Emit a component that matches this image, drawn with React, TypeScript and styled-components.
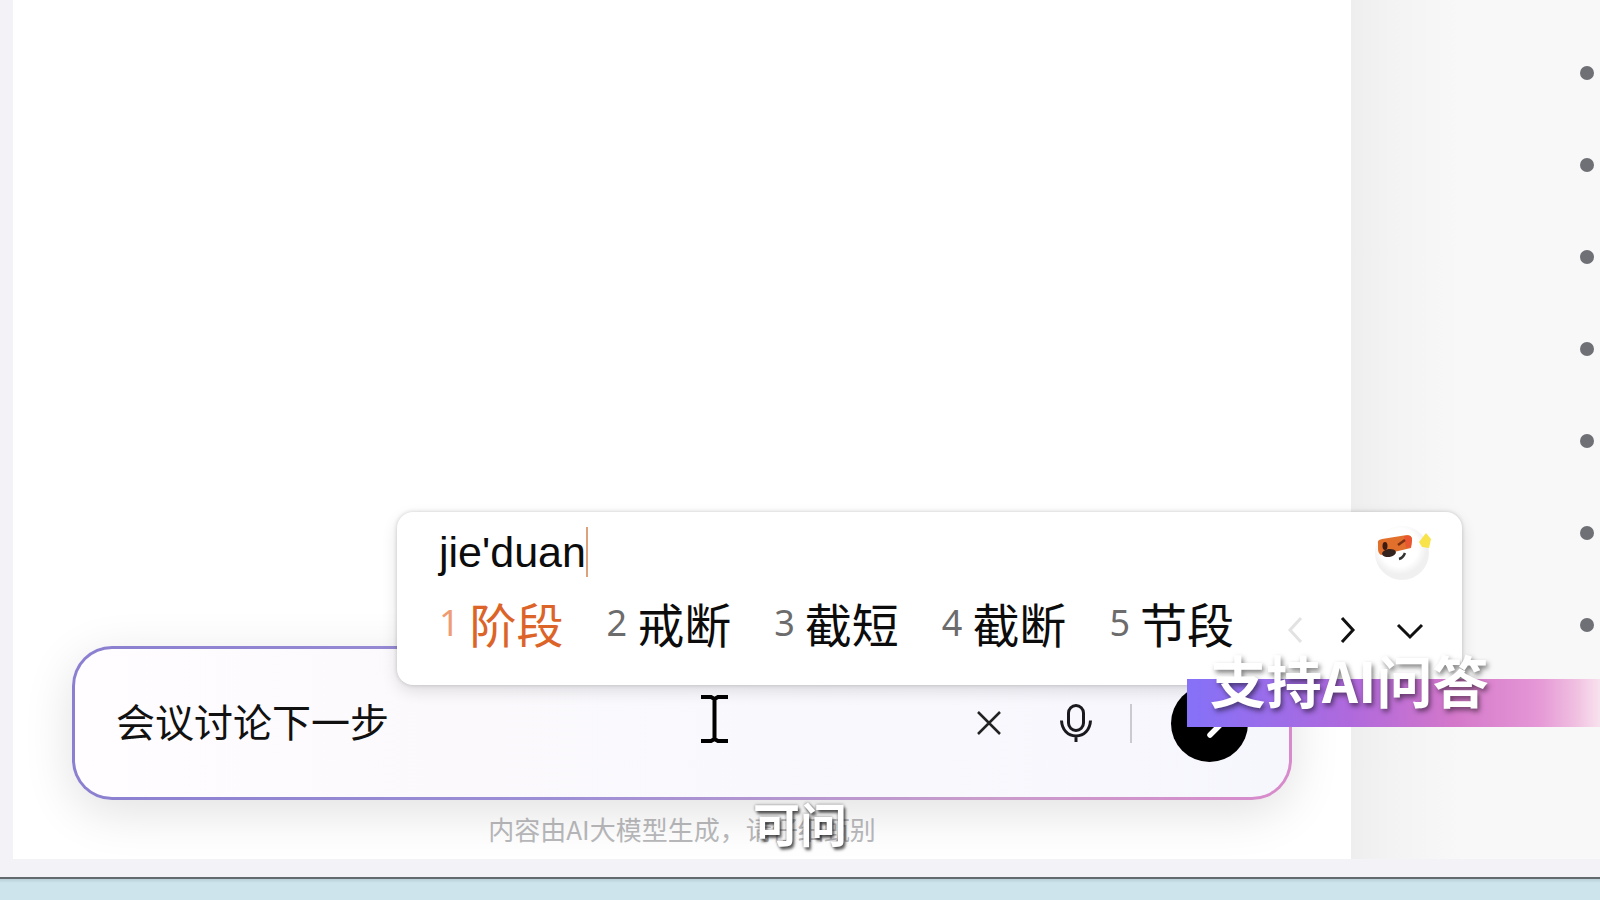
import React from "react";
import styled, { createGlobalStyle } from "styled-components";

const cjk = `"Noto Sans CJK SC", sans-serif`;

const Global = createGlobalStyle`
  * { box-sizing: border-box; }
  body { margin: 0; background: #cde4ec; font-family: "Noto Sans", ${cjk}; overflow: hidden; }
  button { padding: 0; border: 0; background: none; color: inherit; font: inherit; cursor: pointer; }
`;

const Page = styled.div`
  display: flex;
  flex-direction: column;
  height: 100vh;
`;

const Workspace = styled.div`
  flex: 1;
  display: flex;
  padding: 0 0 18px 13px;
  background: #f3f2f7;
  border-bottom: 2px solid #626a6e;
`;

const Desktop = styled.footer`
  height: 21px;
  background: linear-gradient(#b9ced6, #cde4ec 4px);
`;

const Panel = styled.main`
  flex: 1;
  display: flex;
  flex-direction: column;
  justify-content: flex-end;
  gap: 10px;
  padding: 0 59px 11px;
  background: #fff;
`;

const Outline = styled.aside`
  width: 249px;
  padding: 66px 6px 0 0;
  background: linear-gradient(90deg, #eeeeee, #f3f3f3 40px, #f8f8f9 110px, #f8f8f9);
`;

const Dots = styled.ul`
  display: flex;
  flex-direction: column;
  align-items: flex-end;
  gap: 78px;
  margin: 0;
  padding: 0;
  list-style: none;
`;

const Dot = styled.li`
  width: 14px;
  height: 14px;
  border-radius: 50%;
  background: #6f7076;
`;

const Composer = styled.form`
  position: relative;
  display: flex;
  align-items: center;
  height: 154px;
  padding: 0 41px;
  border: 3px solid transparent;
  border-radius: 40px;
  background:
    linear-gradient(90deg, #fffdff, #fbf9fc 30%, #f8f8fd 70%, #f6f6fd) padding-box,
    linear-gradient(95deg, #8a7fd0, #9c8fd6 40%, #c99ccb 75%, #d88acb) border-box;
  box-shadow: 0 12px 50px rgba(0, 0, 0, 0.12);
`;

const Field = styled.input`
  flex: 1;
  min-width: 0;
  height: 60px;
  padding: 0 0 6px;
  border: 0;
  outline: 0;
  background: transparent;
  color: #111;
  font: 400 39px/54px ${cjk};
`;

const IconButton = styled.button`
  display: grid;
  place-items: center;
  width: 48px;
  height: 48px;
  margin-right: 39px;
`;

const Divider = styled.span`
  width: 2px;
  height: 39px;
  margin: 0 39px 0 -9px;
  background: #cacad0;
`;

const Send = styled.button`
  display: grid;
  place-items: center;
  width: 77px;
  height: 77px;
  border-radius: 50%;
  && { background: #000; }
`;

const Hint = styled.p`
  margin: 0;
  text-align: center;
  color: #b9b9bc;
  font: 400 26px/38px ${cjk};
`;

const ImePopup = styled.section`
  position: absolute;
  left: 322px;
  right: -173px;
  bottom: 112px;
  display: flex;
  flex-direction: column;
  padding: 10px 30px 21px 42px;
  border-radius: 16px;
  background: #fff;
  box-shadow: 0 0 4px rgba(0, 0, 0, 0.18), 0 6px 16px rgba(0, 0, 0, 0.12);
`;

const ImeHead = styled.div`
  display: flex;
  align-items: center;
  justify-content: space-between;
  height: 60px;
`;

const Pinyin = styled.span`
  border-right: 2px solid #dda27c;
  color: #0c0c0c;
  font: 400 43px/50px "Liberation Sans", sans-serif;
`;

const ImeRow = styled.div`
  display: flex;
  align-items: center;
  justify-content: space-between;
  height: 82px;
`;

const Candidates = styled.ol`
  display: flex;
  gap: 43px;
  margin: 0;
  padding: 0;
  list-style: none;
`;

const Candidate = styled.button<{ $active?: boolean }>`
  display: flex;
  align-items: center;
  gap: 10px;
  && {
    color: ${(p) => (p.$active ? "#dc6428" : "#0c0c0c")};
    font: 400 47px/68px ${cjk};
  }
`;

const Index = styled.span<{ $active?: boolean }>`
  color: ${(p) => (p.$active ? "#ee9c74" : "#6c6c6c")};
  font: 400 36px/68px "Noto Sans", sans-serif;
`;

const Pager = styled.div`
  display: flex;
  gap: 16px;
  padding: 14px 4px 0 0;
`;

const PagerButton = styled.button`
  display: grid;
  place-items: center;
  width: 36px;
  height: 36px;
  &:last-child { margin-left: 10px; }
`;

const Banner = styled.div`
  position: fixed;
  right: 0;
  bottom: 173px;
  width: 413px;
  padding: 0 0 8px 23px;
  background: linear-gradient(90deg, #8571f8, #b069dc 40%, #d478ca 65%, #e597d6 85%, #f0bfe0 94%, #f8e2ee) left bottom / 100% 48px no-repeat;
  color: #fff;
  font: 700 56px/80px ${cjk};
  text-shadow: 2px 3px 5px rgba(0, 0, 0, 0.5);
`;

const Subtitle = styled.div`
  position: fixed;
  left: 0;
  right: 0;
  bottom: 48px;
  text-align: center;
  color: #fff;
  font: 700 47px/60px ${cjk};
  text-shadow: 0 0 3px rgba(0, 0, 0, 0.5), 2px 3px 3px rgba(0, 0, 0, 0.6);
  pointer-events: none;
`;

const Pointer = styled.svg`
  position: absolute;
  left: 626px;
  top: 46px;
`;

const words = ["阶段", "戒断", "截短", "截断", "节段"];
const outlineEntries = [0, 1, 2, 3, 4, 5, 6];

function Chevron({ d, color = "#111" }: { d: string; color?: string }) {
  return (
    <svg width="36" height="36" viewBox="0 0 36 36" fill="none" stroke={color} strokeWidth="3">
      <path d={d} />
    </svg>
  );
}

function Mascot() {
  return (
    <svg width="58" height="60" viewBox="0 0 58 60">
      <defs>
        <radialGradient id="face" cx="45%" cy="40%">
          <stop offset="70%" stopColor="#fff" />
          <stop offset="100%" stopColor="#f0f0f1" />
        </radialGradient>
      </defs>
      <circle cx="28" cy="31" r="27" fill="url(#face)" />
      <path d="M45 20l7-9 5 6-2 9-7-1z" fill="#f8e34b" />
      <path d="M4 21Q3 18 8 17L33 13Q38 13 38 18L37 26 7 33Q4 31 4 27z" fill="#e2702d" />
      <path d="M30 14h5q3 0 3 4l-1 7-5 1z" fill="#ea5630" />
      <ellipse cx="11" cy="24" rx="2.500" ry="4" fill="#3c1c10" />
      <path d="M24 23l7-5" stroke="#7c2f14" strokeWidth="2.500" />
      <ellipse cx="15" cy="31" rx="7" ry="4" fill="#35231d" transform="rotate(-8 15 31)" />
      <path d="M25 37q4-1 6-6" stroke="#333" strokeWidth="2.500" fill="none" />
    </svg>
  );
}

export default function App() {
  return (
    <>
      <Global />
      <Page>
        <Workspace>
          <Panel>
            <Composer onSubmit={(e) => e.preventDefault()}>
              <Field aria-label="提问" defaultValue="会议讨论下一步" />
              <IconButton type="button" aria-label="清除">
                <svg width="26" height="26" viewBox="0 0 26 26" stroke="#222" strokeWidth="2.500">
                  <path d="M2 2l22 22M24 2L2 24" />
                </svg>
              </IconButton>
              <IconButton type="button" aria-label="语音输入">
                <svg width="34" height="40" viewBox="0 0 34 40" fill="none" stroke="#1a1a1e" strokeWidth="3">
                  <rect x="9.500" y="2.500" width="15" height="25" rx="7.500" />
                  <path d="M2.500 17.500C3 27 9 33 17 33s14-6 14.500-15.500M17 33v6" />
                </svg>
              </IconButton>
              <Divider />
              <Send type="submit" aria-label="发送">
                <svg width="40" height="40" viewBox="0 0 40 40" fill="none" stroke="#fff" strokeWidth="5.500" strokeLinecap="round">
                  <path d="M20 8l12 12-12 12" />
                </svg>
              </Send>
              <Pointer width="27" height="48" viewBox="0 0 27 48" fill="none" stroke="#000" strokeWidth="4">
                <path d="M0 2h10l3.500 2L17 2h10M13.500 3v42M0 46h10l3.500-2 3.500 2h10" />
              </Pointer>
              <ImePopup aria-label="输入法">
                <ImeHead>
                  <Pinyin>jie'duan</Pinyin>
                  <Mascot />
                </ImeHead>
                <ImeRow>
                  <Candidates>
                    {words.map((w, i) => (
                      <li key={w}>
                        <Candidate type="button" $active={i === 0}>
                          <Index $active={i === 0}>{i + 1}</Index>
                          {w}
                        </Candidate>
                      </li>
                    ))}
                  </Candidates>
                  <Pager>
                    <PagerButton type="button" aria-label="上一页">
                      <Chevron d="M23 6L12 18l11 12" color="#e2e2e2" />
                    </PagerButton>
                    <PagerButton type="button" aria-label="下一页">
                      <Chevron d="M12 6l11 12-11 12" />
                    </PagerButton>
                    <PagerButton type="button" aria-label="展开">
                      <Chevron d="M6 13l12 12 12-12" />
                    </PagerButton>
                  </Pager>
                </ImeRow>
              </ImePopup>
            </Composer>
            <Hint>内容由AI大模型生成，请仔细甄别</Hint>
          </Panel>
          <Outline>
            <Dots>
              {outlineEntries.map((n) => (
                <Dot key={n} />
              ))}
            </Dots>
          </Outline>
        </Workspace>
        <Desktop />
      </Page>
      <Banner>支持AI问答</Banner>
      <Subtitle>可问</Subtitle>
    </>
  );
}
